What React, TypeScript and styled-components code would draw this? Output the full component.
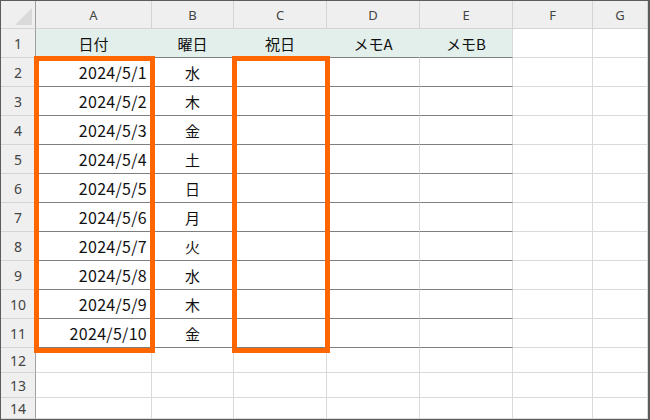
import React from "react";
import styled, { createGlobalStyle } from "styled-components";

const Global = createGlobalStyle`
  html, body { margin: 0; padding: 0; background: #ffffff; }
  body { font-family: "Noto Sans CJK JP", "Noto Sans", sans-serif; }
`;

const Frame = styled.div`
  width: 650px;
  height: 420px;
  box-sizing: border-box;
  border: 1px solid #5c5c5c;
  border-right-width: 2px;
  overflow: hidden;
  display: grid;
  background: #ffffff;
`;

const Layer = styled.div`
  grid-area: 1 / 1;
  display: grid;
  grid-template-columns: 35px 116px 82px 93px 93px 93px 80px 1fr;
  grid-template-rows: 28px 29px repeat(10, 29px) 25px 25px 1fr;
  min-height: 0;
`;

const Overlay = styled(Layer)`
  z-index: 2;
  pointer-events: none;
`;

const Corner = styled.div`
  background: #efefef;
  border-right: 1px solid #a0a0a0;
  border-bottom: 1px solid #d4d4d4;
  display: flex;
  align-items: flex-end;
  justify-content: flex-end;
  padding: 0 3px 3px 0;
`;

const Triangle = styled.div`
  width: 0;
  height: 0;
  border-left: 17px solid transparent;
  border-bottom: 17px solid #dadada;
`;

const ColHead = styled.div`
  background: #efefef;
  border-right: 1px solid #d4d4d4;
  border-bottom: 1px solid #d4d4d4;
  display: flex;
  align-items: center;
  justify-content: center;
  font-family: "Noto Sans", sans-serif;
  font-size: 13px;
  color: #444444;
`;

const RowHead = styled.div`
  background: #efefef;
  border-right: 1px solid #a0a0a0;
  border-bottom: 1px solid #d4d4d4;
  display: flex;
  align-items: center;
  justify-content: center;
  font-family: "Noto Sans", sans-serif;
  font-size: 14px;
  color: #444444;
`;

const Cell = styled.div<{ $fill?: boolean; $rule?: boolean; $align?: string; $open?: boolean }>`
  background: ${(p) => (p.$fill ? "#e2efea" : "#ffffff")};
  border-right: 1px solid ${(p) => (p.$open ? "transparent" : "#dadada")};
  border-bottom: 1px solid ${(p) => (p.$rule ? "#7f7f7f" : "#dadada")};
  display: flex;
  align-items: center;
  justify-content: ${(p) => p.$align || "center"};
  padding: 0 4px;
  font-size: 15px;
  color: #111111;
  white-space: nowrap;
  min-width: 0;
  min-height: 0;
`;

const DateText = styled.span`
  font-size: 16px;
  letter-spacing: 0.3px;
`;

const Highlight = styled.div<{ $col: number }>`
  grid-column: ${(p) => p.$col} / ${(p) => p.$col + 1};
  grid-row: 3 / 13;
  margin: -2px -3px -5px -2px;
  border: 5px solid #ff6600;
`;

const letters = ["A", "B", "C", "D", "E", "F", "G"];
const headers = ["日付", "曜日", "祝日", "メモA", "メモB"];
const days = ["水", "木", "金", "土", "日", "月", "火", "水", "木", "金"];

export default function App() {
  const rows: React.ReactNode[] = [];
  rows.push(<RowHead key="r1">1</RowHead>);
  letters.forEach((l, i) => {
    if (i < 5) {
      rows.push(
        <Cell key={"h" + l} $fill $rule $open={i < 4}>
          {headers[i]}
        </Cell>
      );
    } else {
      rows.push(<Cell key={"h" + l} />);
    }
  });
  for (let r = 2; r <= 14; r++) {
    rows.push(<RowHead key={"rh" + r}>{r}</RowHead>);
    const data = r <= 11;
    letters.forEach((l, i) => {
      let content: React.ReactNode = null;
      if (data && i === 0) content = <DateText>{`2024/5/${r - 1}`}</DateText>;
      if (data && i === 1) content = days[r - 2];
      rows.push(
        <Cell
          key={l + r}
          $rule={data && i < 5}
          $align={i === 0 ? "flex-end" : "center"}
        >
          {content}
        </Cell>
      );
    });
  }
  return (
    <>
      <Global />
      <Frame>
        <Layer>
          <Corner>
            <Triangle />
          </Corner>
          {letters.map((l) => (
            <ColHead key={l}>{l}</ColHead>
          ))}
          {rows}
        </Layer>
        <Overlay>
          <Highlight $col={2} />
          <Highlight $col={4} />
        </Overlay>
      </Frame>
    </>
  );
}
